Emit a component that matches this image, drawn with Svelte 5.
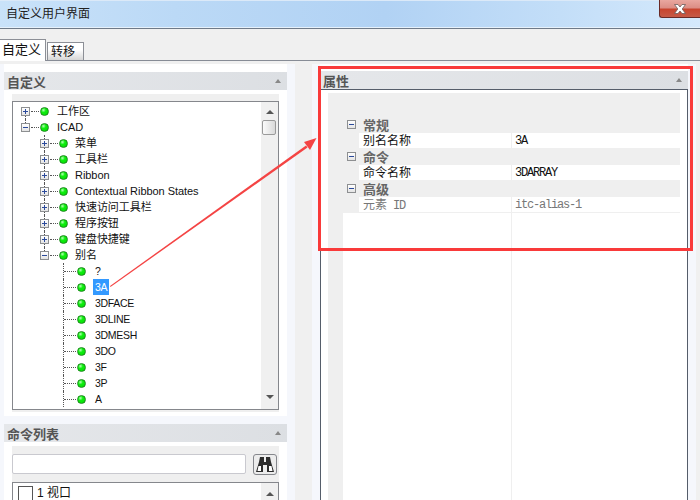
<script>
  const tree = [
    { label: '工作区', depth: 0, exp: '+', line: 'below' },
    { label: 'ICAD', depth: 0, exp: '-', line: 'above' },
    { label: '菜单', depth: 1, exp: '+', line: 'full' },
    { label: '工具栏', depth: 1, exp: '+', line: 'full' },
    { label: 'Ribbon', depth: 1, exp: '+', line: 'full' },
    { label: 'Contextual Ribbon States', depth: 1, exp: '+', line: 'full' },
    { label: '快速访问工具栏', depth: 1, exp: '+', line: 'full' },
    { label: '程序按钮', depth: 1, exp: '+', line: 'full' },
    { label: '键盘快捷键', depth: 1, exp: '+', line: 'full' },
    { label: '别名', depth: 1, exp: '-', line: 'above' },
    { label: '?', depth: 2, line: 'full' },
    { label: '3A', depth: 2, line: 'full', selected: true },
    { label: '3DFACE', depth: 2, line: 'full' },
    { label: '3DLINE', depth: 2, line: 'full' },
    { label: '3DMESH', depth: 2, line: 'full' },
    { label: '3DO', depth: 2, line: 'full' },
    { label: '3F', depth: 2, line: 'full' },
    { label: '3P', depth: 2, line: 'full' },
    { label: 'A', depth: 2, line: 'full' }
  ];

  const sections = [
    { name: '常规', key: '别名名称', value: '3A' },
    { name: '命令', key: '命令名称', value: '3DARRAY' },
    { name: '高级', key: '元素', keyLatin: ' ID', value: 'itc-alias-1', muted: true }
  ];
</script>

<div class="window">
  <header class="titlebar">
    <span>自定义用户界面</span>
    <div class="close">
      <svg width="16" height="12" viewBox="0 0 16 12">
        <path d="M2.5 1.5h3.5l2 2.5 2-2.5h3.5L10.2 6l3.3 4.5H10L8 8l-2 2.5H2.5L5.8 6z" fill="#fff" stroke="#6b5a5a" stroke-width="0.8" />
      </svg>
    </div>
  </header>

  <div class="tabs">
    <div class="tab active">自定义</div>
    <div class="tab">转移</div>
  </div>

  <div class="columns">
    <div class="col left">
      <section class="panel tree-panel">
        <div class="head">
          <span>自定义</span>
          <i class="up small"></i>
        </div>
        <div class="well">
          <div class="tree">
            <div class="rows">
              {#each tree as node}
                <div class="row d{node.depth} {node.line}">
                  {#if node.exp}
                    <span class="exp">
                      <b class="h"></b>
                      {#if node.exp === '+'}<b class="v"></b>{/if}
                    </span>
                  {/if}
                  <span class="dash"></span>
                  <span class="dot"></span>
                  <span class="lbl" class:selected={node.selected}>{node.label}</span>
                </div>
              {/each}
            </div>
            <div class="scroll">
              <i class="up"></i>
              <div class="thumb"></div>
              <i class="down"></i>
            </div>
          </div>
        </div>
      </section>

      <section class="panel cmd-panel">
        <div class="head">
          <span>命令列表</span>
          <i class="up small"></i>
        </div>
        <div class="well cmd">
          <div class="search">
            <div class="input"></div>
            <div class="find">
              <svg width="18" height="17" viewBox="0 0 18 17">
                <path d="M4 1h4v5h2V1h4l1 5 3 10h-7V9H7v7H0l3-10z" fill="#2b2b2b" />
                <path d="M2.5 10h2.5v5H1.5zM13 10h2.5l1 5H13z" fill="#fff" />
              </svg>
            </div>
          </div>
          <div class="list">
            <div class="item">
              <span class="check"></span>
              <span>1 视口</span>
            </div>
            <div class="scroll">
              <i class="up"></i>
            </div>
          </div>
        </div>
      </section>
    </div>

    <div class="col right">
      <section class="panel props">
        <div class="head">
          <span>属性</span>
          <i class="up small"></i>
        </div>
        <div class="box">
          <div class="grid">
            {#each sections as s}
              <div class="sec">
                <span class="exp">
                  <b class="h"></b>
                </span>
                <span>{s.name}</span>
              </div>
              <div class="prop" class:muted={s.muted}>
                <span class="k">{s.key}{#if s.keyLatin}<span class="mono">{s.keyLatin}</span>{/if}</span>
                <span class="val mono">{s.value}</span>
              </div>
            {/each}
            <div class="rest">
              <div class="blank"></div>
            </div>
          </div>
        </div>
      </section>
    </div>
  </div>

  <!-- annotation drawn over the screenshot -->
  <div class="redbox"></div>
  <svg class="arrow" width="700" height="500" viewBox="0 0 700 500">
    <polygon points="110,286 306,145.5 307.5,147.5 110.5,287" fill="#f44444" />
    <polygon points="316.5,138 304,142 310,150" fill="#f44444" />
  </svg>
</div>

<style>
  :global(body) {
    margin: 0;
    overflow: hidden;
  }
  .window {
    position: relative;
    width: 700px;
    height: 500px;
    overflow: hidden;
    background: #f0f0f0;
    font-family: "Liberation Sans", "Noto Sans CJK SC", sans-serif;
    font-size: 12px;
    color: #111;
  }
  .titlebar {
    display: flex;
    align-items: flex-start;
    justify-content: space-between;
    height: 28px;
    box-sizing: border-box;
    padding-left: 6px;
    line-height: 26px;
    color: #222;
    background: linear-gradient(90deg, #c9e2f9 0%, #bbd9f6 25%, #b1d2f4 55%, #c3def8 80%, #d5e9fc 100%);
    border-top: 1px solid #dbe9f8;
    border-bottom: 1px solid #e6f1fb;
    box-shadow: 0 1px 0 #6f7a88;
  }
  .close {
    display: flex;
    align-items: center;
    justify-content: center;
    width: 41px;
    height: 18px;
    margin-top: -1px;
    box-sizing: border-box;
    border: 1px solid #6a2a26;
    border-top: 0;
    border-right: 0;
    border-bottom-left-radius: 3px;
    background: linear-gradient(#e9a79f 0%, #dc8e85 45%, #c8452f 55%, #c65a47 100%);
  }

  .tabs {
    display: flex;
    align-items: flex-end;
    height: 20px;
    margin-top: 12px;
    border-bottom: 1px solid #878c96;
  }
  .tab {
    box-sizing: border-box;
    width: 37px;
    height: 18px;
    margin-left: 1px;
    padding-left: 3px;
    line-height: 18px;
    font-size: 12px;
    border: 1px solid #8c8f96;
    border-bottom: 0;
    background: linear-gradient(#fff 40%, #d6d6d6);
  }
  .tab.active {
    width: 46px;
    height: 22px;
    margin: 0 0 -1px;
    padding-left: 2px;
    line-height: 20px;
    font-size: 13px;
    background: #fff;
    border-left: 0;
  }

  .columns {
    display: flex;
    height: 436px;
    margin-top: 3px;
    gap: 17px;
  }
  .col {
    flex: none;
    background: #f5f7fc;
  }
  .col.left {
    width: 291px;
    padding-left: 4px;
  }
  .col.right {
    width: 368px;
    padding: 0 8px;
  }
  .panel {
    background: #fff;
  }
  .left .panel {
    width: 283px;
  }
  .tree-panel {
    height: 352px;
    padding-top: 8px;
    box-sizing: border-box;
  }
  .cmd-panel {
    margin-top: 8px;
    height: 76px;
    overflow: hidden;
  }
  .props {
    height: 100%;
    padding-top: 7px;
    box-sizing: border-box;
  }
  .head {
    display: flex;
    align-items: center;
    justify-content: space-between;
    height: 18px;
    padding: 0 6px 0 3px;
    font-size: 13px;
    font-weight: bold;
    color: #555;
    background: linear-gradient(90deg, #e5e7ea, #dcdfe3);
  }

  i.up, i.down {
    display: block;
    width: 0;
    height: 0;
    border-left: 4px solid transparent;
    border-right: 4px solid transparent;
  }
  i.up {
    border-bottom: 4px solid #555;
  }
  i.down {
    border-top: 4px solid #555;
  }
  i.small {
    border-left-width: 3px;
    border-right-width: 3px;
    border-bottom-color: #888;
  }

  .well {
    margin: 4px 8px 0;
    background: #efefef;
  }
  .tree-panel .well {
    height: 318px;
    padding-top: 7px;
    box-sizing: border-box;
  }
  .tree {
    display: flex;
    height: 309px;
    box-sizing: border-box;
    background: #fff;
    border: 1px solid #85878c;
  }
  .rows {
    flex: 1;
    padding-top: 1px;
    overflow: hidden;
  }
  .row {
    position: relative;
    display: flex;
    align-items: center;
    height: 16px;
    white-space: nowrap;
  }
  .row.d0 { padding-left: 8px; }
  .row.d1 { padding-left: 27px; }
  .row.d2 { padding-left: 51px; }
  .row::before {
    content: "";
    position: absolute;
    top: 0;
    bottom: 0;
    border-left: 1px dotted #555;
  }
  .row.d0::before { left: 12px; }
  .row.d1::before { left: 31px; }
  .row.d2::before { left: 50px; }
  .row.below::before { top: 50%; }
  .row.above::before { bottom: 50%; }

  .exp {
    position: relative;
    z-index: 1;
    flex: none;
    box-sizing: border-box;
    width: 9px;
    height: 9px;
    background: linear-gradient(#fff, #e4e4e4);
    border: 1px solid #8d8f91;
  }
  .exp b {
    position: absolute;
    background: #2b4a9b;
  }
  .exp .h {
    left: 1px;
    top: 3px;
    width: 5px;
    height: 1px;
  }
  .exp .v {
    left: 3px;
    top: 1px;
    width: 1px;
    height: 5px;
  }
  .dash {
    flex: none;
    width: 8px;
    margin: 0 1px;
    border-top: 1px dotted #555;
  }
  .d2 .dash {
    width: 12px;
    margin: 0 1px 0 0;
  }
  .dot {
    flex: none;
    box-sizing: border-box;
    width: 9px;
    height: 9px;
    border-radius: 50%;
    border: 1px solid #1c8a1c;
    background: radial-gradient(circle at 35% 30%, #b8ffb8 0, #10ee10 35%, #00d800 100%);
  }
  .lbl {
    margin-left: 8px;
    line-height: 16px;
    font-size: 11px;
  }
  .d2 .lbl {
    margin-left: 7px;
    padding: 0 2px;
    font-size: 10.5px;
    letter-spacing: -0.3px;
  }
  .d1 .lbl {
    margin-left: 7px;
    letter-spacing: -0.05px;
  }
  .lbl.selected {
    color: #fff;
    background: #3399ff;
  }

  .scroll {
    display: flex;
    flex-direction: column;
    align-items: center;
    justify-content: space-between;
    flex: none;
    box-sizing: border-box;
    width: 17px;
    padding: 9px 0 10px;
    background: #f0f0f0;
    position: relative;
  }
  .tree .scroll {
    padding-top: 8px;
  }
  .thumb {
    position: absolute;
    top: 18px;
    left: 1px;
    width: 14px;
    height: 15px;
    box-sizing: border-box;
    background: linear-gradient(90deg, #fbfbfb, #d9d9d9);
    border: 1px solid #9a9a9a;
    border-radius: 2px;
  }

  .well.cmd {
    padding-top: 8px;
    height: 100%;
  }
  .search {
    display: flex;
    align-items: flex-start;
    gap: 7px;
  }
  .input {
    width: 234px;
    height: 20px;
    box-sizing: border-box;
    background: #fff;
    border: 1px solid #c9c9cf;
    border-radius: 2px;
  }
  .find {
    display: flex;
    align-items: center;
    justify-content: center;
    width: 24px;
    height: 21px;
    box-sizing: border-box;
    background: #ececec;
    border: 1px solid #85878c;
    border-radius: 3px;
  }
  .list {
    display: flex;
    justify-content: space-between;
    height: 40px;
    margin-top: 7px;
    box-sizing: border-box;
    background: #fff;
    border: 1px solid #85878c;
  }
  .item {
    display: flex;
    align-items: flex-start;
    gap: 4px;
    padding: 3px 0 0 5px;
    font-size: 12px;
    line-height: 14px;
  }
  .check {
    display: block;
    width: 13px;
    height: 13px;
    border: 1px solid #555;
  }

  .box {
    height: 411px;
    box-sizing: border-box;
    padding: 3px 7px 0;
    border: 1px solid #555d6a;
    border-bottom: 0;
    background: #fff;
  }
  .grid {
    display: flex;
    flex-direction: column;
    height: 100%;
    padding-top: 23px;
    box-sizing: border-box;
    background: #efefef;
  }
  .sec {
    display: flex;
    align-items: center;
    height: 17px;
    box-sizing: border-box;
    padding: 0 0 1px 19px;
    gap: 7px;
    font-size: 13px;
    font-weight: bold;
    color: #666;
  }
  .prop {
    display: flex;
    height: 15px;
    margin-left: 31px;
    line-height: 17px;
    background: #fff;
  }
  .k {
    width: 148px;
    padding-left: 4px;
    font-size: 12px;
    border-right: 1px solid #efefef;
    white-space: pre;
  }
  .mono {
    font-family: "Liberation Mono", monospace;
    font-size: 12px;
    letter-spacing: -1.2px;
  }
  .val {
    padding-left: 3px;
  }
  .prop.muted {
    color: #777;
    border-bottom: 1px solid #efefef;
  }
  .rest {
    flex: 1;
    margin-left: 15px;
    background: #fff;
  }
  .blank {
    width: 168px;
    height: 100%;
    border-right: 1px solid #efefef;
  }

  .redbox {
    position: absolute;
    left: 318px;
    top: 66px;
    width: 369px;
    height: 179px;
    border: 3px solid #f93a3a;
  }
  .arrow {
    position: absolute;
    left: 0;
    top: 0;
    pointer-events: none;
  }
</style>
